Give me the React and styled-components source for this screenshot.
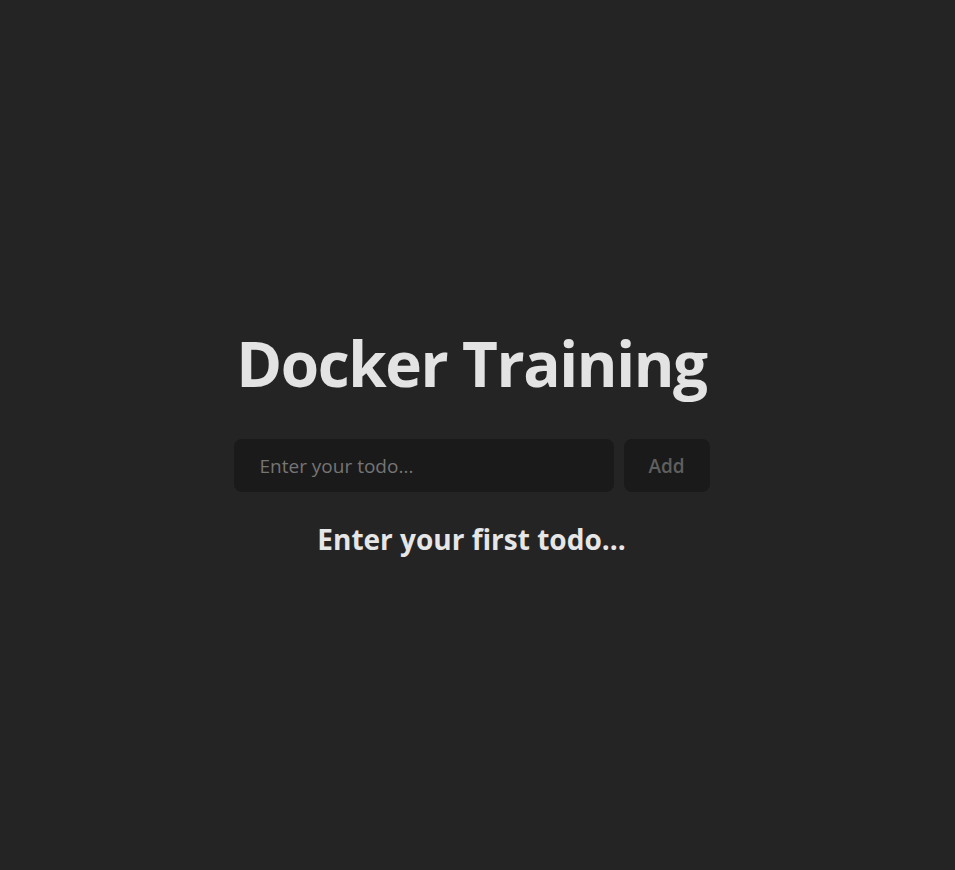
import React, { useState } from 'react'
import styled, { createGlobalStyle } from 'styled-components';

const GlobalStyle = createGlobalStyle`
  * {
    box-sizing: border-box;
  }
  html, body {
    margin: 0;
    background: #242424;
    color: rgba(255, 255, 255, 0.87);
    font-family: "Open Sans", "Noto Sans", sans-serif;
  }
`;

const Page = styled.main`
  min-height: 100vh;
  display: flex;
  flex-direction: column;
  align-items: center;
  justify-content: center;
  text-align: center;
  padding: 17px 12px 0 0;
`;

const Title = styled.h1`
  margin: 0 0 42px;
  font-size: 62px;
  line-height: 1.1;
  font-weight: 700;
  letter-spacing: -1.4px;
  color: #e3e3e3;
`;

const Form = styled.form`
  display: flex;
  gap: 10px;
`;

const Input = styled.input`
  width: 380px;
  height: 53px;
  padding: 0 26px;
  border: none;
  border-radius: 8px;
  background: #1a1a1a;
  color: #e3e3e3;
  font-family: inherit;
  font-size: 19px;
  font-weight: 500;
  outline: none;
  &::placeholder {
    color: #757575;
  }
`;

const Button = styled.button`
  width: 86px;
  height: 53px;
  border: none;
  border-radius: 8px;
  background: #1a1a1a;
  color: #5f5f5f;
  font-family: inherit;
  font-size: 19px;
  font-weight: 600;
  cursor: pointer;
`;

const Empty = styled.h2`
  margin: 28px 0 0;
  font-size: 28px;
  font-weight: 700;
  color: #e6e6e6;
`;

export default function App() {
  const [todo, setTodo] = useState('');
  return (
    <>
      <GlobalStyle />
      <Page>
        <Title>Docker Training</Title>
        <Form onSubmit={e => e.preventDefault()}>
          <Input
            placeholder="Enter your todo..."
            value={todo}
            onChange={e => setTodo(e.target.value)}
          />
          <Button type="submit" disabled={!todo}>Add</Button>
        </Form>
        <Empty>Enter your first todo...</Empty>
      </Page>
    </>
  );
}
